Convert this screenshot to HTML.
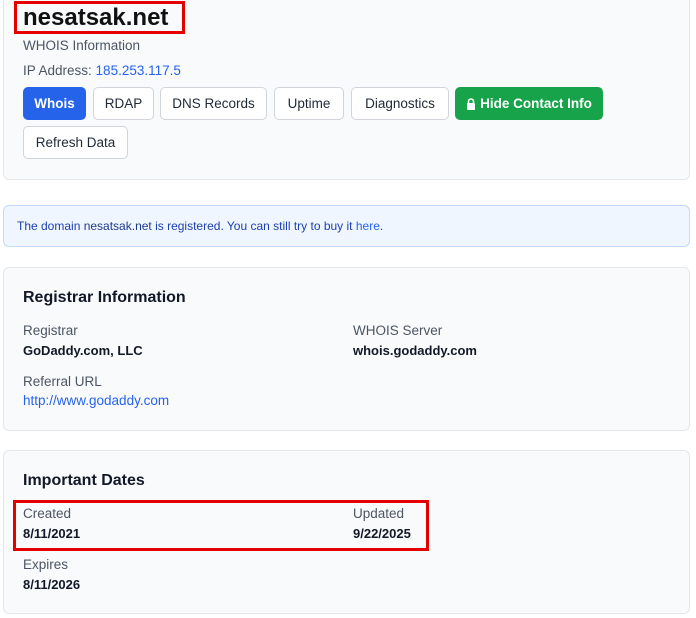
<!DOCTYPE html>
<html><head><style>
*{margin:0;padding:0;box-sizing:border-box}
body{width:696px;height:618px;background:#fff;font-family:"Liberation Sans",sans-serif;position:relative;overflow:hidden;color:#111827}
.a{position:absolute;white-space:nowrap}
.card{position:absolute;left:3px;width:687px;background:#f9fafb;border:1px solid #e5e7eb;border-radius:6px}
.btn{position:absolute;top:87px;height:33px;border:1px solid #d1d5db;border-radius:5px;background:#fff;font-size:13.5px;color:#1f2937;display:flex;align-items:center;justify-content:center}
.lbl{font-size:13.5px;color:#4b5563}
.val{font-size:13px;font-weight:bold;color:#111827}
.h{font-size:16px;font-weight:bold;color:#111827}
.red{position:absolute;border:3px solid #e50000}
</style></head><body>
<div class="a" style="left:275px;top:0;width:145px;height:1px;background:#fbd0d0"></div>
<div class="card" style="top:-10px;height:190px"></div>
<div class="a" style="left:23px;top:4px;font-size:24px;font-weight:bold;color:#111">nesatsak.net</div>
<div class="red" style="left:14px;top:1px;width:171px;height:33px"></div>
<div class="a" style="left:23px;top:38px;font-size:13.5px;color:#4b5563">WHOIS Information</div>
<div class="a" style="left:23px;top:63px;font-size:13.5px;color:#4b5563">IP Address: <span style="color:#2563eb">185.253.117.5</span></div>
<div class="btn" style="left:23px;width:63px;background:#2563eb;border-color:#2563eb;color:#fff;font-weight:bold">Whois</div>
<div class="btn" style="left:93px;width:61px">RDAP</div>
<div class="btn" style="left:160px;width:107px">DNS Records</div>
<div class="btn" style="left:274px;width:70px">Uptime</div>
<div class="btn" style="left:351px;width:98px">Diagnostics</div>
<div class="btn" style="left:455px;width:148px;background:#16a34a;border-color:#16a34a;color:#fff;font-weight:bold"><svg width="10" height="12" viewBox="0 0 10 12" style="margin-right:4px"><path d="M2.5 5V3.5a2.5 2.5 0 0 1 5 0V5" stroke="#fff" stroke-width="1.6" fill="none"/><rect x="1" y="5" width="8" height="7" rx="1" fill="#fff"/></svg>Hide Contact Info</div>
<div class="btn" style="left:23px;top:126px;width:105px">Refresh Data</div>

<div class="a" style="left:3px;top:205px;width:687px;height:42px;background:#eff6ff;border:1px solid #bfdbfe;border-radius:6px"></div>
<div class="a" style="left:17px;top:219px;font-size:12px;color:#1e40af">The domain <span style="color:#1e3a8a">nesatsak.net</span> is registered. You can still try to buy it <span style="color:#2563eb">here</span>.</div>

<div class="card" style="top:267px;height:164px"></div>
<div class="a h" style="left:23px;top:289px">Registrar Information</div>
<div class="a lbl" style="left:23px;top:323px">Registrar</div>
<div class="a val" style="left:23px;top:343px">GoDaddy.com, LLC</div>
<div class="a lbl" style="left:353px;top:323px">WHOIS Server</div>
<div class="a val" style="left:353px;top:343px">whois.godaddy.com</div>
<div class="a lbl" style="left:23px;top:374px">Referral URL</div>
<div class="a" style="left:23px;top:393px;font-size:13.5px;color:#2563eb">http://www.godaddy.com</div>

<div class="card" style="top:450px;height:164px"></div>
<div class="a h" style="left:23px;top:472px">Important Dates</div>
<div class="a lbl" style="left:23px;top:506px">Created</div>
<div class="a val" style="left:23px;top:526px">8/11/2021</div>
<div class="a lbl" style="left:353px;top:506px">Updated</div>
<div class="a val" style="left:353px;top:526px">9/22/2025</div>
<div class="red" style="left:13px;top:500px;width:416px;height:51px"></div>
<div class="a lbl" style="left:23px;top:557px">Expires</div>
<div class="a val" style="left:23px;top:577px">8/11/2026</div>
</body></html>
